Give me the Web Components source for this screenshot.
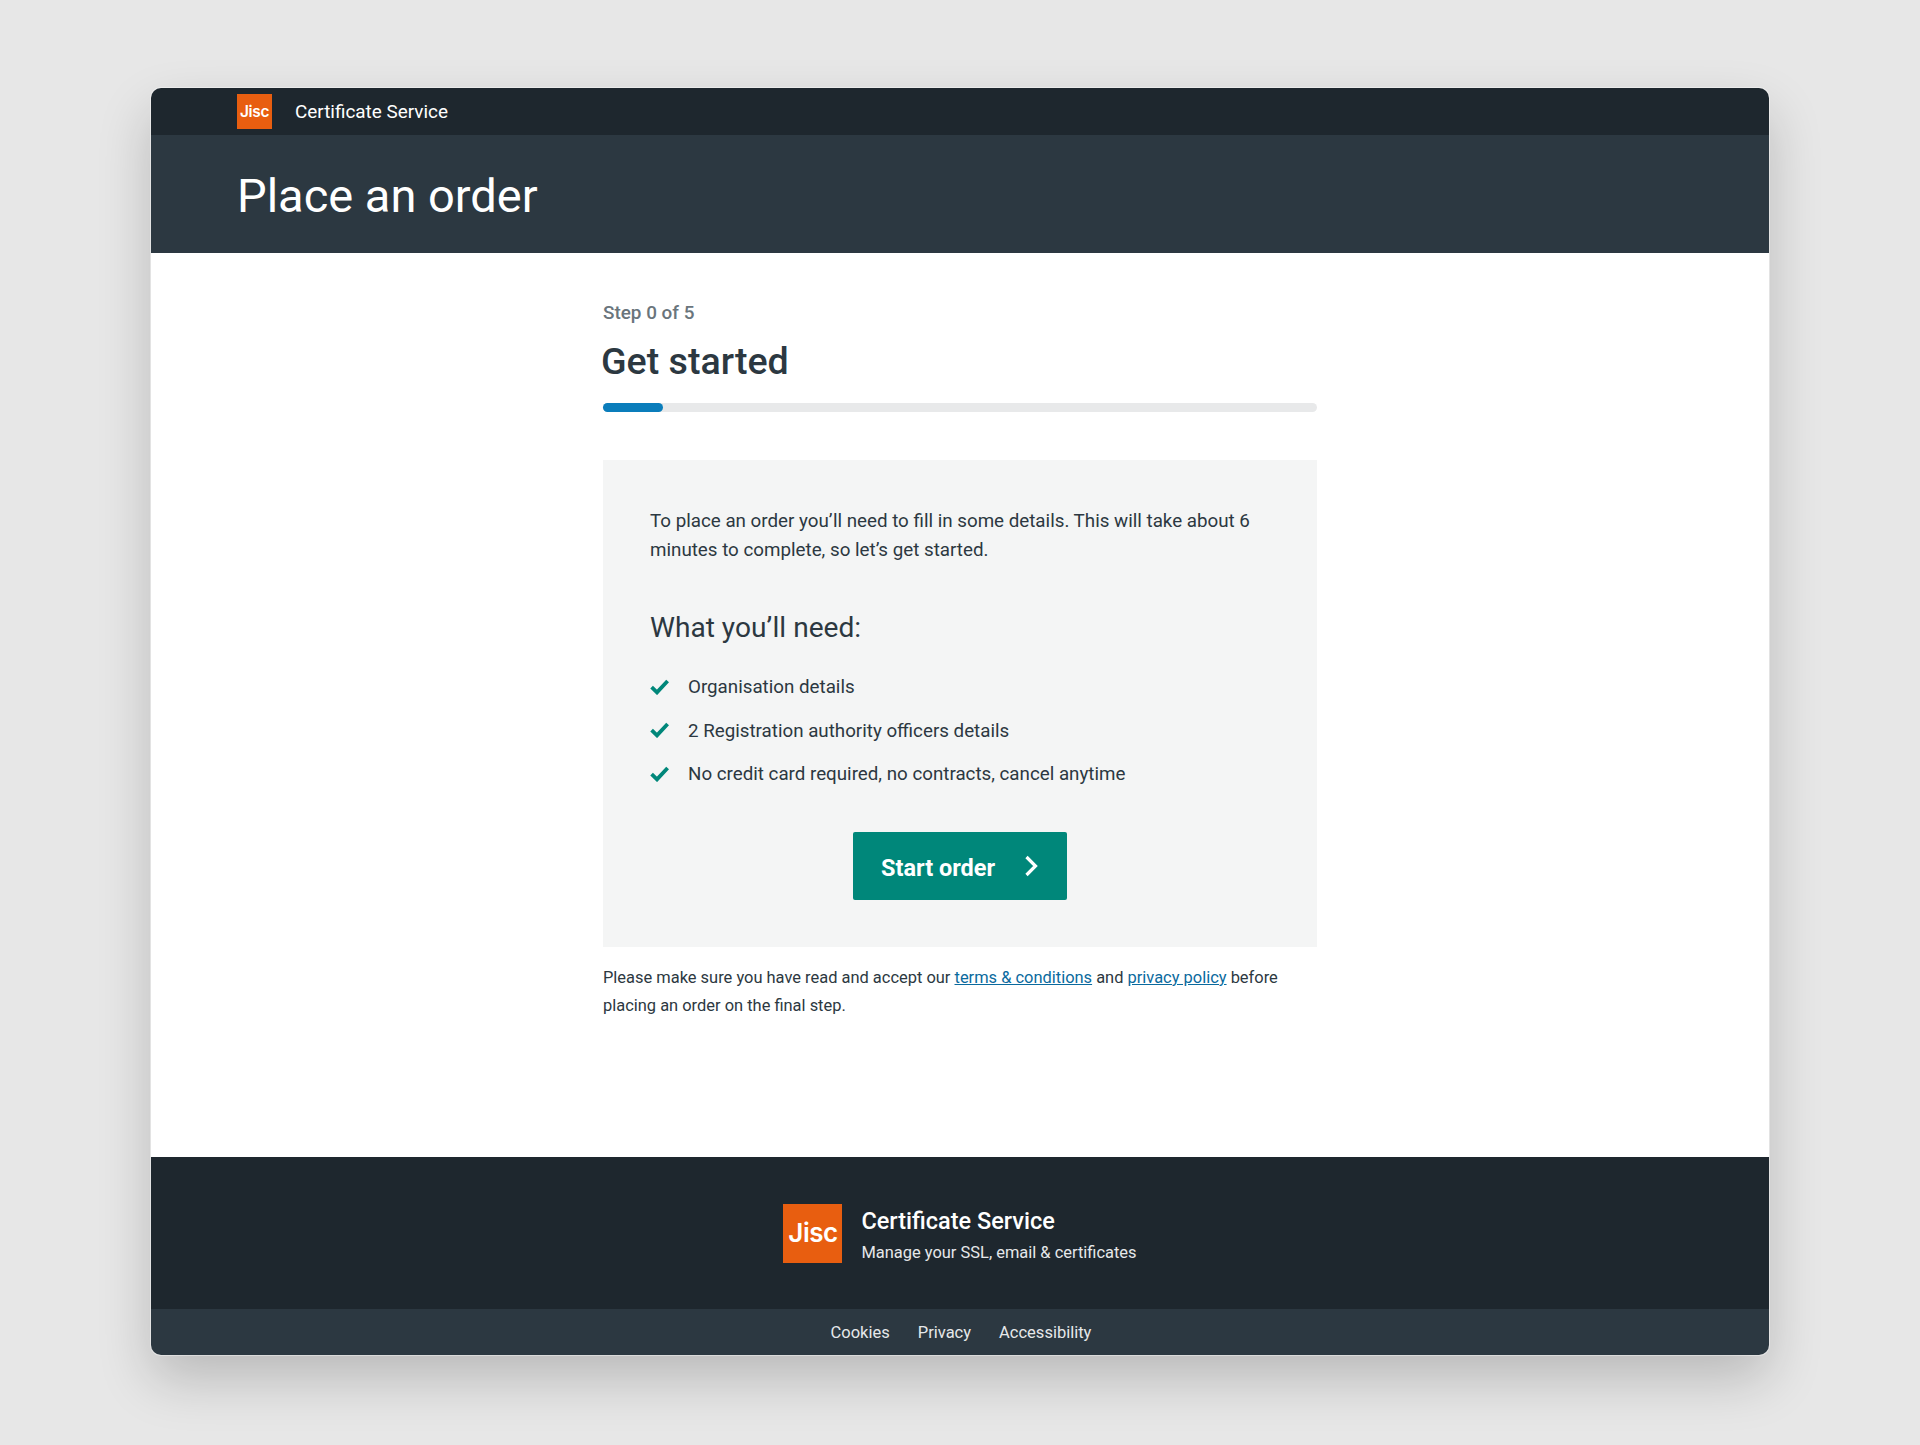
<!DOCTYPE html>
<html lang="en">
<head>
<meta charset="utf-8">
<title>Place an order</title>
<style>
  html, body { margin: 0; padding: 0; }
  body { background: #e7e7e7; font-family: Roboto, "Liberation Sans", sans-serif; color: #212b32; }
</style>
</head>
<body>
<app-window>
  <top-bar></top-bar>
  <page-title>Place an order</page-title>
  <order-step></order-step>
  <site-footer></site-footer>
</app-window>

<script>
class JiscLogo extends HTMLElement {
  constructor() {
    super();
    const size = Number(this.getAttribute("size") || 35);
    this.attachShadow({ mode: "open" }).innerHTML = `
      <style>
        :host { display: flex; flex: none; align-items: center; justify-content: center; width: ${size}px; height: ${size}px; background: #e85e10; color: #fff; }
        span { font-family: Inter, sans-serif; font-size: ${size * 0.44}px; font-weight: 600; letter-spacing: -0.02em; line-height: 1; }
      </style>
      <span>Jisc</span>`;
  }
}
customElements.define("jisc-logo", JiscLogo);

class AppWindow extends HTMLElement {
  constructor() {
    super();
    this.attachShadow({ mode: "open" }).innerHTML = `
      <style>
        :host { display: flex; flex-direction: column; width: 1618px; height: 1267px; margin: 88px auto 90px; border-radius: 10px; overflow: hidden; background: #fff;
          box-shadow: 0 0 0 1px rgba(255,255,255,.4), 0 24px 54px rgba(0,0,0,.2); }
      </style>
      <slot></slot>`;
  }
}
customElements.define("app-window", AppWindow);

class TopBar extends HTMLElement {
  constructor() {
    super();
    this.attachShadow({ mode: "open" }).innerHTML = `
      <style>
        :host { display: flex; align-items: center; gap: 23px; flex: none; height: 47px; padding-left: 86px; background: #1e272e; color: #fff; font-size: 18.9px; }
      </style>
      <jisc-logo size="35"></jisc-logo>
      <span>Certificate Service</span>`;
  }
}
customElements.define("top-bar", TopBar);

class PageTitle extends HTMLElement {
  constructor() {
    super();
    this.attachShadow({ mode: "open" }).innerHTML = `
      <style>
        :host { display: flex; align-items: center; flex: none; box-sizing: border-box; height: 118px; padding: 2px 0 0 86px; background: #2c3841; color: #fff; font-size: 47px; font-weight: 400; }
      </style>
      <slot></slot>`;
  }
}
customElements.define("page-title", PageTitle);

class CheckItem extends HTMLElement {
  constructor() {
    super();
    this.attachShadow({ mode: "open" }).innerHTML = `
      <style>
        :host { display: flex; align-items: center; gap: 19px; height: 43.5px; font-size: 18.75px; color: #2c3841; }
        svg { flex: none; width: 19px; height: 16px; margin-top: -1px; }
      </style>
      <svg viewBox="0 0 19 16"><path d="M1.6 8.2 L7 13.4 L17.6 2" fill="none" stroke="#00877a" stroke-width="3.8"/></svg>
      <span><slot></slot></span>`;
  }
}
customElements.define("check-item", CheckItem);

class StartButton extends HTMLElement {
  constructor() {
    super();
    this.attachShadow({ mode: "open" }).innerHTML = `
      <style>
        :host { display: flex; align-items: center; justify-content: space-between; box-sizing: border-box; width: 214px; height: 68px; padding: 0 28px; background: #00877a; border-radius: 2px; color: #fff; font-size: 23.5px; font-weight: 700; }
        span { padding-top: 3px; }
        svg { width: 16px; height: 22px; }
      </style>
      <span>Start order</span>
      <svg viewBox="0 0 16 22"><path d="M3.5 2 L12.5 11 L3.5 20" fill="none" stroke="#fff" stroke-width="3.2"/></svg>`;
  }
}
customElements.define("start-button", StartButton);

class OrderStep extends HTMLElement {
  constructor() {
    super();
    this.attachShadow({ mode: "open" }).innerHTML = `
      <style>
        :host { display: block; flex: 1; width: 714px; margin: 0 auto; }
        .step { margin: 49px 0 0; font-size: 18.9px; line-height: 22px; font-weight: 500; color: #6a757c; }
        h1 { margin: 13px 0 0 -2px; font-size: 37.6px; line-height: 48px; font-weight: 500; color: #2c3841; }
        .track { height: 9px; margin-top: 18px; background: #e8e9ea; border-radius: 5px; }
        .fill { width: 60px; height: 100%; background: #0a7dbb; border-radius: 5px; }
        .panel { margin-top: 48px; padding: 47px 47px 47px; background: #f4f5f5; }
        p.intro { margin: 0; font-size: 18.77px; line-height: 28.5px; color: #2c3841; }
        h2 { margin: 43.5px 0 0; font-size: 28.1px; line-height: 40px; font-weight: 400; color: #2c3841; }
        .list { margin-top: 18px; }
        .cta { display: flex; justify-content: center; margin-top: 36px; }
        p.note { margin: 17px 0 0; font-size: 16.44px; line-height: 28px; color: #2c3841; }
        a { color: #0a6a9e; text-decoration: underline; }
      </style>
      <div class="step">Step 0 of 5</div>
      <h1>Get started</h1>
      <div class="track"><div class="fill"></div></div>
      <div class="panel">
        <p class="intro">To place an order you’ll need to fill in some details. This will take about 6 minutes to complete, so let’s get started.</p>
        <h2>What you’ll need:</h2>
        <div class="list">
          <check-item>Organisation details</check-item>
          <check-item>2 Registration authority officers details</check-item>
          <check-item>No credit card required, no contracts, cancel anytime</check-item>
        </div>
        <div class="cta"><start-button></start-button></div>
      </div>
      <p class="note">Please make sure you have read and accept our <a href="#">terms &amp; conditions</a> and <a href="#">privacy policy</a> before placing an order on the final step.</p>`;
  }
}
customElements.define("order-step", OrderStep);

class SiteFooter extends HTMLElement {
  constructor() {
    super();
    this.attachShadow({ mode: "open" }).innerHTML = `
      <style>
        :host { display: block; flex: none; color: #fff; }
        .brand { display: flex; align-items: center; justify-content: center; gap: 19px; height: 152px; background: #1e272e; }
        .name { font-size: 23.5px; font-weight: 500; line-height: 30px; padding-top: 4px; }
        .tag { font-size: 16.45px; line-height: 24px; margin-top: 5px; color: #e6e8ea; }
        .links { display: flex; align-items: center; justify-content: center; gap: 28px; height: 46px; padding: 1px 0 0 2px; box-sizing: border-box; background: #2c3841; font-size: 16.5px; color: #e6e8ea; }
      </style>
      <div class="brand">
        <jisc-logo size="59"></jisc-logo>
        <div><div class="name">Certificate Service</div><div class="tag">Manage your SSL, email &amp; certificates</div></div>
      </div>
      <div class="links"><span>Cookies</span><span>Privacy</span><span>Accessibility</span></div>`;
  }
}
customElements.define("site-footer", SiteFooter);
</script>
</body>
</html>
